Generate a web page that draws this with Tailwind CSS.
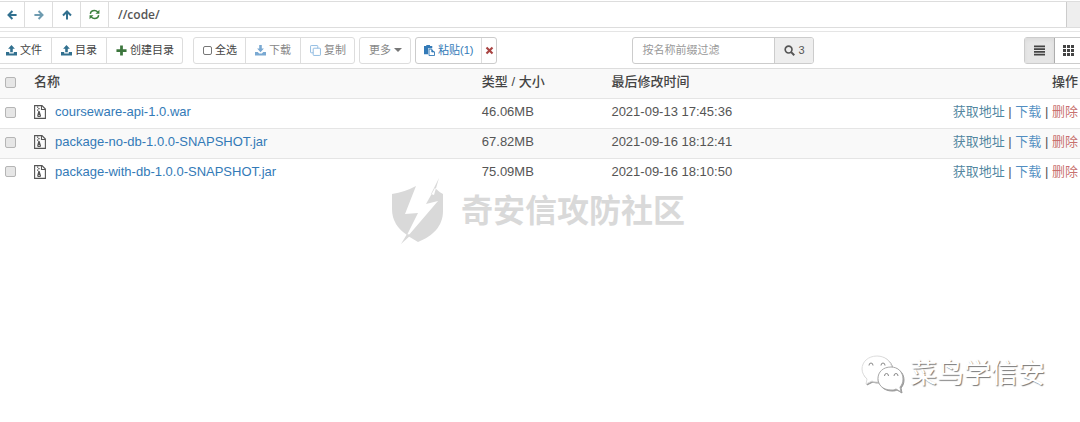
<!DOCTYPE html>
<html lang="zh-CN">
<head>
    <meta charset="UTF-8">
    <meta name="viewport" content="width=device-width, initial-scale=1.0">
    <title>//code/</title>
    <script src="https://cdn.jsdelivr.net/npm/@tailwindcss/browser@4"></script>
</head>
<body class="relative min-h-screen overflow-x-hidden bg-white text-[13px] text-[#333] font-['Liberation_Sans','Noto_Sans_CJK_SC',sans-serif]">
    <!-- Icons -->
    <svg class="hidden">
        <symbol id="arrow" viewBox="0 0 12 12"><path d="M6.500 1.200 1.800 6l4.700 4.800M2 6h9.500" fill="none" stroke="currentColor" stroke-width="2.400"/></symbol>
        <symbol id="refresh" viewBox="0 0 12 12"><path d="M1.500 5.300C1.700 3 3.500 1.600 6 1.600c1.500 0 2.600.6 3.500 1.600M10.500 6.700C10.300 9 8.500 10.400 6 10.400c-1.500 0-2.600-.6-3.500-1.600" fill="none" stroke="currentColor" stroke-width="1.600"/><path d="M11.400.8v4.300H7.100zM.6 11.200V6.900h4.300z" fill="currentColor"/></symbol>
        <symbol id="upload" viewBox="0 0 12 12"><path d="M6 0 2.300 4.200h2.300V8h2.800V4.200h2.300zM0 7.500h3.500v1.700h5V7.500H12V11.500H0z" fill="currentColor"/></symbol>
        <symbol id="download" viewBox="0 0 12 12"><path d="M4.600 0h2.800v3.800h2.300L6 8 2.300 3.800h2.300zM0 7.500h3l1.500 1.700h3L9 7.500h3v4H0z" fill="currentColor"/></symbol>
        <symbol id="plus" viewBox="0 0 12 12"><path d="M4.500.500h3v4h4v3h-4v4h-3v-4h-4v-3h4z" fill="currentColor"/></symbol>
        <symbol id="copy" viewBox="0 0 12 12"><path d="M3.500 8.500H1.300a.7.7 0 0 1-.7-.7V1.300a.7.7 0 0 1 .7-.7h6.500a.7.7 0 0 1 .7.7v2.200M4.200 3.500h6.500a.7.7 0 0 1 .7.7v6.500a.7.7 0 0 1-.7.7H4.200a.7.7 0 0 1-.7-.7V4.200a.7.7 0 0 1 .7-.7z" fill="none" stroke="currentColor"/></symbol>
        <symbol id="paste" viewBox="0 0 12 12"><path d="M0 1h2.500V0h4v1H9v2.500H4.500V10H0z" fill="currentColor"/><path d="M5.500 4.500h3v3h3v4h-6z" fill="#fff" stroke="currentColor"/><path d="M8.500 4.500l3 3h-3z" fill="currentColor"/></symbol>
        <symbol id="remove" viewBox="0 0 12 12"><path d="m3 1 3 3 3-3 2 2-3 3 3 3-2 2-3-3-3 3-2-2 3-3-3-3z" fill="currentColor"/></symbol>
        <symbol id="search" viewBox="0 0 12 12"><circle cx="5" cy="5" r="3.700" fill="none" stroke="currentColor" stroke-width="1.800"/><path d="m7.800 7.800 3.400 3.400" stroke="currentColor" stroke-width="2.200"/></symbol>
        <symbol id="list" viewBox="0 0 12 12"><path d="M0 .500h12v2H0zM0 3.500h12v2H0zM0 6.500h12v2H0zM0 9.500h12v2H0z" fill="currentColor"/></symbol>
        <symbol id="grid" viewBox="0 0 12 12"><path d="M0 1h3v3H0zM4 1h3v3H4zM8 1h3v3H8zM0 5h3v3H0zM4 5h3v3H4zM8 5h3v3H8zM0 9h3v3H0zM4 9h3v3H4zM8 9h3v3H8z" fill="currentColor"/></symbol>
        <symbol id="archive" viewBox="0 0 12 14"><path d="M.6.6h7.400l3.400 3.400v9.400H.6zM7.500.6v3.900h3.900" fill="none" stroke="currentColor" stroke-width="1.100"/><path d="M3 1.500h1.300v1.200H3zM4.300 3h1.300v1.200H4.300zM3 4.500h1.300v1.200H3zM4.300 6h1.300l1.400 4.400c.2 1-.7 1.600-1.900 1.600s-2.100-.6-1.900-1.600z" fill="currentColor"/><path d="M4.400 10h1.400v.8H4.400z" fill="#fff"/></symbol>
    </svg>

    <!-- Path bar -->
    <div class="flex h-8 border-b border-[#e5e5e5] pt-px">
        <div class="flex h-[27px] flex-1 border-y border-[#ddd]">
            <button aria-label="后退" class="flex w-[25px] items-center justify-center border-r border-[#ddd] pr-px text-[#31708f]"><svg class="size-[10px]"><use href="#arrow"/></svg></button>
            <button aria-label="前进" class="flex w-[28px] items-center justify-center border-r border-[#ddd] text-[#31708f]/70"><svg class="size-[10px] rotate-180"><use href="#arrow"/></svg></button>
            <button aria-label="上级目录" class="flex w-[28px] items-center justify-center border-r border-[#ddd] text-[#31708f]"><svg class="size-[10px] rotate-90"><use href="#arrow"/></svg></button>
            <button aria-label="刷新" class="flex w-[28px] items-center justify-center border-r border-[#ddd] text-[#3c803d]"><svg class="size-[11px]"><use href="#refresh"/></svg></button>
            <input aria-label="路径" value="//code/" class="min-w-0 flex-1 border-r border-[#ccc] px-[9px] text-[12px] font-semibold text-[#555] outline-none font-['Open_Sans',sans-serif]">
            <div class="w-[13px] bg-[#eee]"></div>
        </div>
    </div>

    <!-- Toolbar -->
    <div class="flex h-9 items-center text-[11px] text-[#444]">
        <div class="flex h-[27px] rounded-r-[3px] border border-l-0 border-[#ddd]">
            <button class="flex items-center gap-[3px] border-r border-[#ddd] pr-[9px] pl-[6px]"><svg class="size-[11px] text-[#31708f]"><use href="#upload"/></svg>文件</button>
            <button class="flex items-center gap-[3px] border-r border-[#ddd] px-[9px]"><svg class="size-[11px] text-[#31708f]"><use href="#upload"/></svg>目录</button>
            <button class="flex items-center gap-[3px] pr-2 pl-[9px]"><svg class="size-[11px] text-[#3c763d]"><use href="#plus"/></svg>创建目录</button>
        </div>
        <div class="ml-[10px] flex h-[27px] rounded-[3px] border border-[#ddd]">
            <button class="flex items-center gap-[3px] border-r border-[#ddd] pr-2 pl-[9px]"><span class="size-[9px] rounded-[2px] border border-[#777]"></span>全选</button>
            <button class="flex items-center gap-[3px] border-r border-[#ddd] px-[9px] text-[#888]"><svg class="size-[11px] text-[#7aa9d2]"><use href="#download"/></svg>下载</button>
            <button class="flex items-center gap-[3px] pr-2 pl-[9px] text-[#888]"><svg class="size-[11px] text-[#8ab8e0]"><use href="#copy"/></svg>复制</button>
        </div>
        <button class="ml-1 flex h-[27px] items-center gap-[3px] rounded-[3px] border border-[#ddd] pr-2 pl-[9px] text-[#888]">更多<span class="border-x-[4px] border-t-[4px] border-x-transparent border-t-[#777]"></span></button>
        <div class="ml-1 flex h-[27px] rounded-[3px] border border-[#ccc]">
            <button class="flex items-center gap-[3px] border-r border-[#ddd] px-2 text-[#337ab7]"><svg class="size-[11px]"><use href="#paste"/></svg>粘贴(1)</button>
            <button aria-label="清除" class="flex w-[14px] items-center justify-center text-[#a94442]"><svg class="size-[9px]"><use href="#remove"/></svg></button>
        </div>
        <div class="ml-[135px] flex h-[27px] w-[182px] overflow-hidden rounded-[3px] border border-[#ccc]">
            <input aria-label="过滤" placeholder="按名称前缀过滤" class="min-w-0 flex-1 px-[9px] outline-none placeholder:text-[#999]">
            <button class="flex w-[39px] items-center justify-center gap-[3px] border-l border-[#ccc] bg-[#eee] text-[#555]"><svg class="size-[11px]"><use href="#search"/></svg>3</button>
        </div>
        <div class="-mr-1 ml-auto flex h-[27px] rounded-[3px] border border-[#ccc]">
            <button aria-label="列表" class="flex w-[30px] items-center justify-center border-r border-[#adadad] bg-[#e6e6e6] shadow-inner"><svg class="size-[11px]"><use href="#list"/></svg></button>
            <button aria-label="网格" class="flex w-[28px] items-center justify-center pb-px"><svg class="size-[12px]"><use href="#grid"/></svg></button>
        </div>
    </div>

    <!-- Files -->
    <table class="w-full table-fixed border-t border-[#ddd] leading-4 text-[#555]">
        <thead>
            <tr class="h-[30px] bg-[#f9f9f9] text-left text-[#444]">
                <th class="w-[34px] pl-[5px]"><input type="checkbox" aria-label="全选" class="mb-[3px] block size-[11px] appearance-none rounded-[2px] border border-[#b5b5b5] bg-[#e6e6e6]"></th>
                <th class="pb-[3px] font-medium">名称</th>
                <th class="w-[12%] pb-[3px] font-medium">类型 / 大小</th>
                <th class="w-[22%] pb-[3px] font-medium">最后修改时间</th>
                <th class="w-[231px] pr-[2px] pb-[3px] text-right font-medium">操作</th>
            </tr>
        </thead>
        <tbody>
            <tr class="h-[30px] border-t border-[#e5e5e5]">
                <td class="pb-[3px] pl-[5px]"><input type="checkbox" aria-label="courseware-api-1.0.war" class="block size-[11px] appearance-none rounded-[2px] border border-[#b5b5b5] bg-[#e6e6e6]"></td>
                <td class="pb-[3px]"><a href="#" class="flex items-center gap-[9px] text-[#337ab7]"><svg class="h-[14px] w-3 text-[#555]"><use href="#archive"/></svg>courseware-api-1.0.war</a></td>
                <td class="pb-[3px]">46.06MB</td>
                <td class="pb-[3px]">2021-09-13 17:45:36</td>
                <td class="pr-[2px] pb-[3px] text-right"><a href="#" class="text-[#31708f]/85">获取地址</a> | <a href="#" class="text-[#337ab7]/85">下载</a> | <a href="#" class="text-[#b94a48]/80">删除</a></td>
            </tr>
            <tr class="h-[30px] border-t border-[#e5e5e5] bg-[#f9f9f9]">
                <td class="pb-[3px] pl-[5px]"><input type="checkbox" aria-label="package-no-db-1.0.0-SNAPSHOT.jar" class="block size-[11px] appearance-none rounded-[2px] border border-[#b5b5b5] bg-[#e6e6e6]"></td>
                <td class="pb-[3px]"><a href="#" class="flex items-center gap-[9px] text-[#337ab7]"><svg class="h-[14px] w-3 text-[#555]"><use href="#archive"/></svg>package-no-db-1.0.0-SNAPSHOT.jar</a></td>
                <td class="pb-[3px]">67.82MB</td>
                <td class="pb-[3px]">2021-09-16 18:12:41</td>
                <td class="pr-[2px] pb-[3px] text-right"><a href="#" class="text-[#31708f]/85">获取地址</a> | <a href="#" class="text-[#337ab7]/85">下载</a> | <a href="#" class="text-[#b94a48]/80">删除</a></td>
            </tr>
            <tr class="h-[29px] border-t border-[#e5e5e5]">
                <td class="pb-[3px] pl-[5px]"><input type="checkbox" aria-label="package-with-db-1.0.0-SNAPSHOT.jar" class="block size-[11px] appearance-none rounded-[2px] border border-[#b5b5b5] bg-[#e6e6e6]"></td>
                <td class="pb-[3px]"><a href="#" class="flex items-center gap-[9px] text-[#337ab7]"><svg class="h-[14px] w-3 text-[#555]"><use href="#archive"/></svg>package-with-db-1.0.0-SNAPSHOT.jar</a></td>
                <td class="pb-[3px]">75.09MB</td>
                <td class="pb-[3px]">2021-09-16 18:10:50</td>
                <td class="pr-[2px] pb-[3px] text-right"><a href="#" class="text-[#31708f]/85">获取地址</a> | <a href="#" class="text-[#337ab7]/85">下载</a> | <a href="#" class="text-[#b94a48]/80">删除</a></td>
            </tr>
        </tbody>
    </table>

    <!-- Watermarks -->
    <div class="pointer-events-none absolute inset-x-0 top-[177px] flex items-center justify-center gap-[17px] pr-1 text-[32px] leading-none font-bold text-[#d9d9d9]">
        <svg class="h-[68px] w-[53px]" viewBox="0 0 53 68" fill="currentColor"><path d="M1 17Q14 15 25 9L14 37l13-1-11 22Q1 48 1 32zM44 11q4 4 8 6v17c0 15-10 25-25 31l-10-6 30-35-12 3zM48 1l-8 16 3 1zM10 67l6-10 4 1z"/></svg>
        <span>奇安信攻防社区</span>
    </div>
    <div class="pointer-events-none absolute top-[354px] right-[35px] flex items-center gap-[6px] text-[27px] leading-10 text-white [text-shadow:1px_1px_1px_#777]">
        <svg class="h-[38px] w-[43px] drop-shadow-[1px_1px_0_#999]" viewBox="0 0 43 38" fill="#fff" stroke="#ddd" stroke-width="1">
            <path d="M16 1C7 1 1 7 1 14c0 4 2 7 5 10l-1 5 6-3c2 1 4 1 6 1-1-8 5-14 14-14C30 6 24 1 16 1z"/>
            <path d="M30 12c-8 0-13 5-13 11.500S22 35 30 35c2 0 3 0 5-1l5 3-1-5c2-2 3-5 3-8 0-7-5-12-12-12z" stroke="#aaa"/>
            <path d="M8 10.500q0-2.500 2-2.500t2 2.500M20 10.500q0-2.500 2-2.500t2 2.500M23.500 21q0-2.500 2-2.500t2 2.500M33 21q0-2.500 2-2.500t2 2.500" fill="none" stroke="#888"/>
        </svg>
        <span>菜鸟学信安</span>
    </div>
</body>
</html>
